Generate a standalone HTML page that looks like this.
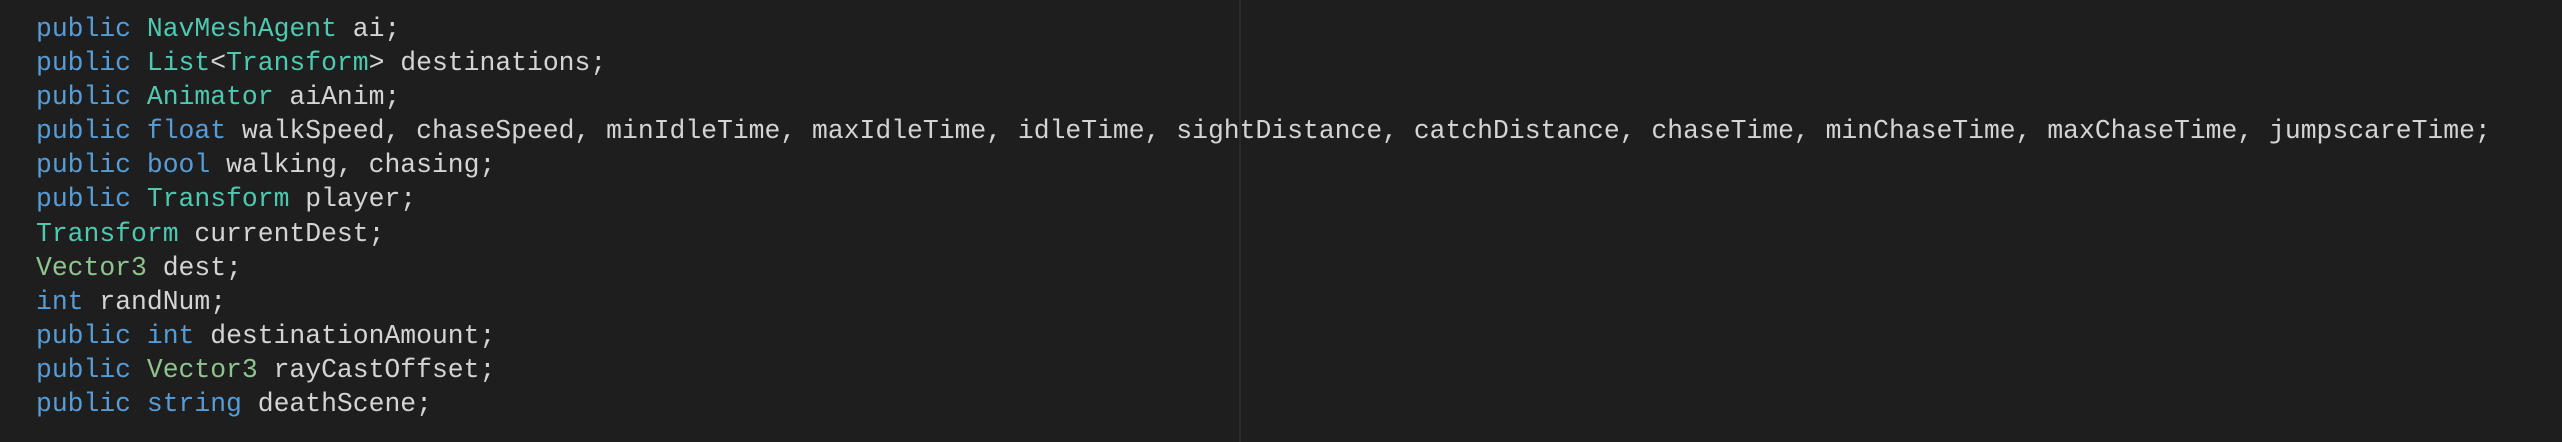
<!DOCTYPE html>
<html><head><style>
html,body{margin:0;padding:0;background:#1e1e1e;width:2562px;height:442px;overflow:hidden;position:relative}
pre{margin:0;position:absolute;left:36px;top:12px;font-family:"Liberation Mono",monospace;font-size:26.4px;line-height:34.1px;color:#d4d4d4}
.k{color:#569cd6}.t{color:#4ec9b0}.v{color:#8ec48f}
.vl{position:absolute;left:1239px;top:0;width:2px;height:442px;background:#2a2a30}
</style></head><body>
<div class="vl"></div>
<pre><span class="k">public</span> <span class="t">NavMeshAgent</span> ai;
<span class="k">public</span> <span class="t">List</span>&lt;<span class="t">Transform</span>&gt; destinations;
<span class="k">public</span> <span class="t">Animator</span> aiAnim;
<span class="k">public</span> <span class="k">float</span> walkSpeed, chaseSpeed, minIdleTime, maxIdleTime, idleTime, sightDistance, catchDistance, chaseTime, minChaseTime, maxChaseTime, jumpscareTime;
<span class="k">public</span> <span class="k">bool</span> walking, chasing;
<span class="k">public</span> <span class="t">Transform</span> player;
<span class="t">Transform</span> currentDest;
<span class="v">Vector3</span> dest;
<span class="k">int</span> randNum;
<span class="k">public</span> <span class="k">int</span> destinationAmount;
<span class="k">public</span> <span class="v">Vector3</span> rayCastOffset;
<span class="k">public</span> <span class="k">string</span> deathScene;</pre>
</body></html>
